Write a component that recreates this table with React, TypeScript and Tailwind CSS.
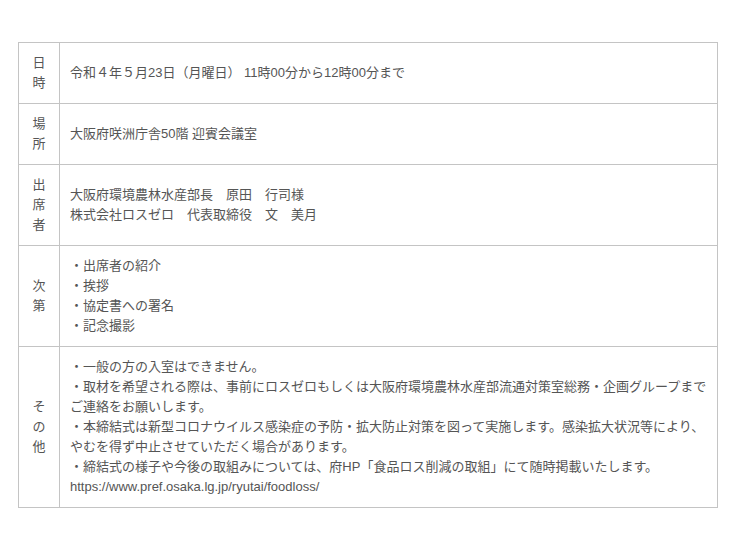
const rows: { label: string[]; lines: string[] }[] = [
  { label: ['日', '時'], lines: ['令和４年５月23日（月曜日） 11時00分から12時00分まで'] },
  { label: ['場', '所'], lines: ['大阪府咲洲庁舎50階 迎賓会議室'] },
  {
    label: ['出', '席', '者'],
    lines: ['大阪府環境農林水産部長　原田　行司様', '株式会社ロスゼロ　代表取締役　文　美月'],
  },
  {
    label: ['次', '第'],
    lines: ['・出席者の紹介', '・挨拶', '・協定書への署名', '・記念撮影'],
  },
  {
    label: ['そ', 'の', '他'],
    lines: [
      '・一般の方の入室はできません。',
      '・取材を希望される際は、事前にロスゼロもしくは大阪府環境農林水産部流通対策室総務・企画グループまでご連絡をお願いします。',
      '・本締結式は新型コロナウイルス感染症の予防・拡大防止対策を図って実施します。感染拡大状況等により、やむを得ず中止させていただく場合があります。',
      '・締結式の様子や今後の取組みについては、府HP「食品ロス削減の取組」にて随時掲載いたします。',
      'https://www.pref.osaka.lg.jp/ryutai/foodloss/',
    ],
  },
];

export default function App() {
  return (
    <div
      className="w-[740px] h-[548px] bg-white pt-[42px] pl-[18px] text-[13px] leading-[20px] text-[#555]"
      style={{ fontFamily: '"Liberation Sans", "Noto Sans CJK JP", sans-serif' }}
    >
      <table className="w-[700px] border-collapse">
        <tbody>
          {rows.map((row, i) => (
            <tr key={i}>
              <td className="w-[41px] border border-[#c4c4c4] py-[10px] text-center align-middle">
                {row.label.map((c, j) => (
                  <div key={j}>{c}</div>
                ))}
              </td>
              <td className="border border-[#c4c4c4] py-[10px] pl-[10px] pr-[8px] align-middle">
                {row.lines.map((l, j) => (
                  <div key={j}>{l}</div>
                ))}
              </td>
            </tr>
          ))}
        </tbody>
      </table>
    </div>
  );
}
